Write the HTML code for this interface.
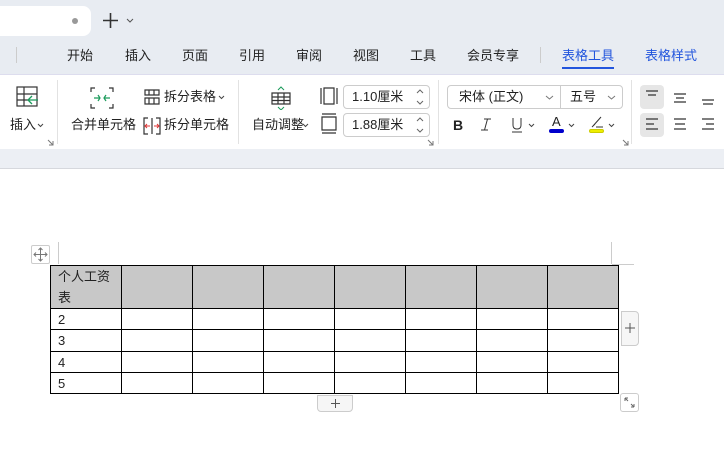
<!DOCTYPE html><html><head><meta charset="utf-8"><style>
*{margin:0;padding:0;box-sizing:border-box}
body{width:724px;height:465px;overflow:hidden;background:#fff;font-family:"Liberation Sans","Noto Sans CJK SC",sans-serif;font-size:13px;color:#222;position:relative}
.a{position:absolute}
.t{position:absolute;white-space:nowrap;line-height:16px}
table{border-collapse:collapse;position:absolute;left:50px;top:265px}
td{border:1px solid #000;width:71px;font-size:13px;padding:0 0 0 7px;font-family:"Liberation Sans","WenQuanYi Zen Hei",sans-serif}
.ic{stroke:#333;fill:none;stroke-width:1.2}
.cv{position:absolute}
</style></head><body>
<div class="a" style="left:0;top:0;width:724px;height:74px;background:#e8ecf2"></div>
<div class="a" style="left:-10px;top:6px;width:101px;height:30px;background:#fff;border-radius:8px"></div>
<div class="a" style="left:72px;top:18px;width:6px;height:6px;border-radius:3px;background:#999"></div>
<svg class="a" style="left:103px;top:13px" width="15" height="15"><path d="M7.5 0V15M0 7.5H15" stroke="#333" stroke-width="1.6"/></svg>
<svg class="cv" style="left:126px;top:18px" width="8" height="5"><path d="M1 1L4 4L7 1" stroke="#555" fill="none"/></svg>
<div class="a" style="left:16px;top:47px;width:1px;height:16px;background:#ccc"></div>
<div class="t" style="left:67px;top:48px">开始</div>
<div class="t" style="left:125px;top:48px">插入</div>
<div class="t" style="left:182px;top:48px">页面</div>
<div class="t" style="left:239px;top:48px">引用</div>
<div class="t" style="left:296px;top:48px">审阅</div>
<div class="t" style="left:353px;top:48px">视图</div>
<div class="t" style="left:410px;top:48px">工具</div>
<div class="t" style="left:467px;top:48px">会员专享</div>
<div class="a" style="left:540px;top:47px;width:1px;height:16px;background:#ccc"></div>
<div class="t" style="left:562px;top:48px;color:#2255dd">表格工具</div>
<div class="a" style="left:562px;top:67px;width:52px;height:2px;background:#2255dd"></div>
<div class="t" style="left:645px;top:48px;color:#2255dd">表格样式</div>
<div class="a" style="left:0;top:74px;width:724px;height:75px;background:#fff;border-top:1px solid #dde"></div>
<div class="a" style="left:0;top:149px;width:724px;height:20px;background:#eceff4;border-bottom:1px solid #d6d8dd"></div>
<svg class="a" style="left:16px;top:86px" width="24" height="24"><rect x="1" y="1" width="20" height="19" class="ic"/><path d="M1 8H21M1 14H12M8 1V20" class="ic"/><path d="M22 14H12M16 10L12 14L16 18" stroke="#1a9a5a" fill="none" stroke-width="1.3"/></svg>
<div class="t" style="left:10px;top:117px">插入</div>
<svg class="cv" style="left:37px;top:123px" width="7" height="5"><path d="M1 1L3.5 3.5L6 1" stroke="#444" fill="none"/></svg>
<div class="a" style="left:57px;top:80px;width:1px;height:64px;background:#e2e2e2"></div>
<svg class="a" style="left:90px;top:87px" width="24" height="22"><path d="M1 5V1H5M19 1H23V5M1 17V21H5M19 21H23V17" class="ic"/><path d="M4 11H10M8 8L10 11L8 14M20 11H14M16 8L14 11L16 14" stroke="#1a9a5a" fill="none" stroke-width="1.2"/></svg>
<div class="t" style="left:71px;top:117px">合并单元格</div>
<svg class="a" style="left:144px;top:89px" width="16" height="16"><path d="M1 1H15V6H1ZM1 9H15V15H1ZM5 1V6M10 1V6M5 9V15M10 9V15" class="ic"/></svg>
<div class="t" style="left:164px;top:89px">拆分表格</div>
<svg class="cv" style="left:218px;top:95px" width="7" height="5"><path d="M1 1L3.5 3.5L6 1" stroke="#444" fill="none"/></svg>
<svg class="a" style="left:143px;top:117px" width="18" height="18"><path d="M5 1H1V17H5M13 1H17V17H13M9 1V17" class="ic"/><path d="M2 9H7M4 7L2 9L4 11" stroke="#d33" fill="none"/><path d="M16 9H11M14 7L16 9L14 11" stroke="#d33" fill="none"/></svg>
<div class="t" style="left:164px;top:117px">拆分单元格</div>
<div class="a" style="left:238px;top:80px;width:1px;height:64px;background:#e2e2e2"></div>
<svg class="a" style="left:270px;top:86px" width="22" height="24"><path d="M2 7H20V18H2ZM2 11H20M2 14.5H20M8 7V18M14 7V18" class="ic"/><path d="M8 4L11 1L14 4M8 21L11 24L14 21" stroke="#1a9a5a" fill="none"/></svg>
<div class="t" style="left:252px;top:117px">自动调整</div>
<svg class="cv" style="left:302px;top:123px" width="7" height="5"><path d="M1 1L3.5 3.5L6 1" stroke="#444" fill="none"/></svg>
<svg class="a" style="left:320px;top:86px" width="18" height="48"><path d="M1 2V18M17 2V18M4 2H14V18H4Z" class="ic"/><path d="M2 31V44H16V31ZM2 28H16M2 47H16" class="ic"/></svg>
<div class="a" style="left:343px;top:85px;width:87px;height:24px;border:1px solid #ccc;border-radius:4px"></div>
<div class="t" style="left:352px;top:89px">1.10厘米</div>
<svg class="cv" style="left:416px;top:89px" width="8" height="16"><path d="M1 4L4 1L7 4M1 12L4 15L7 12" stroke="#666" fill="none"/></svg>
<div class="a" style="left:343px;top:113px;width:87px;height:24px;border:1px solid #ccc;border-radius:4px"></div>
<div class="t" style="left:352px;top:117px">1.88厘米</div>
<svg class="cv" style="left:416px;top:117px" width="8" height="16"><path d="M1 4L4 1L7 4M1 12L4 15L7 12" stroke="#666" fill="none"/></svg>
<div class="a" style="left:438px;top:80px;width:1px;height:64px;background:#e2e2e2"></div>
<div class="a" style="left:447px;top:85px;width:176px;height:24px;border:1px solid #ccc;border-radius:4px"></div>
<div class="a" style="left:560px;top:85px;width:1px;height:24px;background:#ccc"></div>
<div class="t" style="left:459px;top:89px">宋体 (正文)</div>
<svg class="cv" style="left:545px;top:95px" width="9" height="5"><path d="M1 1L4.5 4L8 1" stroke="#777" fill="none"/></svg>
<div class="t" style="left:570px;top:89px">五号</div>
<svg class="cv" style="left:607px;top:95px" width="9" height="5"><path d="M1 1L4.5 4L8 1" stroke="#777" fill="none"/></svg>
<div class="t" style="left:453px;top:117px;font-weight:bold;font-size:14px">B</div>
<svg class="a" style="left:480px;top:117px" width="12" height="15"><path d="M4 2H11M1 13H8M7.5 2L4.5 13" stroke="#333" fill="none"/></svg>
<svg class="a" style="left:511px;top:117px" width="12" height="16"><path d="M2 1V8Q2 12 6 12Q10 12 10 8V1M1 15H11" stroke="#333" fill="none"/></svg>
<svg class="cv" style="left:528px;top:123px" width="7" height="5"><path d="M1 1L3.5 3.5L6 1" stroke="#444" fill="none"/></svg>
<div class="t" style="left:552px;top:114px">A</div><div class="a" style="left:549px;top:129px;width:15px;height:4px;background:#00c;border-radius:2px"></div>
<svg class="cv" style="left:568px;top:123px" width="7" height="5"><path d="M1 1L3.5 3.5L6 1" stroke="#444" fill="none"/></svg>
<svg class="a" style="left:590px;top:115px" width="14" height="13"><path d="M3 11L11 2M2 12L5 9M6 12H13" stroke="#333" fill="none"/></svg>
<div class="a" style="left:589px;top:129px;width:15px;height:4px;background:#ee0;border:1px solid #cc0;border-radius:2px"></div>
<svg class="cv" style="left:608px;top:123px" width="7" height="5"><path d="M1 1L3.5 3.5L6 1" stroke="#444" fill="none"/></svg>
<div class="a" style="left:631px;top:80px;width:1px;height:64px;background:#e2e2e2"></div>
<div class="a" style="left:640px;top:85px;width:24px;height:24px;background:#e6e6e6;border-radius:4px"></div>
<div class="a" style="left:640px;top:113px;width:24px;height:24px;background:#e6e6e6;border-radius:4px"></div>
<svg class="a" style="left:640px;top:85px" width="84" height="52"><path d="M6 6H18M8 10H16M34 9H46M36 13H44M34 17H46M62 15H74M63 19H73M6 34H18M6 39H14M6 44H18M34 34H46M35 39H45M34 44H46M62 34H74M66 39H74M62 44H74" class="ic"/></svg>
<svg class="cv" style="left:47px;top:139px" width="7" height="7"><path d="M1 1L6 6M6 2V6H2" stroke="#777" fill="none"/></svg>
<svg class="cv" style="left:427px;top:139px" width="7" height="7"><path d="M1 1L6 6M6 2V6H2" stroke="#777" fill="none"/></svg>
<svg class="cv" style="left:622px;top:139px" width="7" height="7"><path d="M1 1L6 6M6 2V6H2" stroke="#777" fill="none"/></svg>
<div class="a" style="left:31px;top:245px;width:19px;height:19px;border:1px solid #ccc;border-radius:2px"></div>
<svg class="a" style="left:33px;top:247px" width="15" height="15"><path d="M7.5 1V14M1 7.5H14M5.5 3L7.5 1L9.5 3M5.5 12L7.5 14L9.5 12M3 5.5L1 7.5L3 9.5M12 5.5L14 7.5L12 9.5" stroke="#777" fill="none"/></svg>
<div class="a" style="left:58px;top:242px;width:1px;height:22px;background:#ccc"></div>
<div class="a" style="left:611px;top:242px;width:1px;height:22px;background:#ccc"></div>
<div class="a" style="left:612px;top:264px;width:22px;height:1px;background:#ccc"></div>
<table>
<tr style="height:43px;background:#c8c8c8"><td style="vertical-align:top;line-height:21px;padding-top:0">个人工资<br>表</td><td></td><td></td><td></td><td></td><td></td><td></td><td></td></tr>
<tr style="height:21px"><td>2</td><td></td><td></td><td></td><td></td><td></td><td></td><td></td></tr>
<tr style="height:22px"><td>3</td><td></td><td></td><td></td><td></td><td></td><td></td><td></td></tr>
<tr style="height:21px"><td>4</td><td></td><td></td><td></td><td></td><td></td><td></td><td></td></tr>
<tr style="height:21px"><td>5</td><td></td><td></td><td></td><td></td><td></td><td></td><td></td></tr>
</table>
<div class="a" style="left:621px;top:311px;width:18px;height:35px;border:1px solid #ccc;border-radius:0 4px 4px 0;background:#f6f6f6"></div>
<svg class="a" style="left:625px;top:323px" width="10" height="10"><path d="M5 0V10M0 5H10" stroke="#555"/></svg>
<div class="a" style="left:317px;top:395px;width:36px;height:17px;border:1px solid #ccc;border-radius:0 0 4px 4px;background:#f6f6f6"></div>
<svg class="a" style="left:331px;top:399px" width="9" height="9"><path d="M4.5 0V9M0 4.5H9" stroke="#555"/></svg>
<div class="a" style="left:620px;top:393px;width:19px;height:19px;border:1px solid #ccc;border-radius:3px"></div>
<svg class="a" style="left:623px;top:396px" width="13" height="13"><path d="M2 2L5 5M2 2V5M2 2H5M11 11L8 8M11 11V8M11 11H8" stroke="#666" fill="none"/></svg>
</body></html>
